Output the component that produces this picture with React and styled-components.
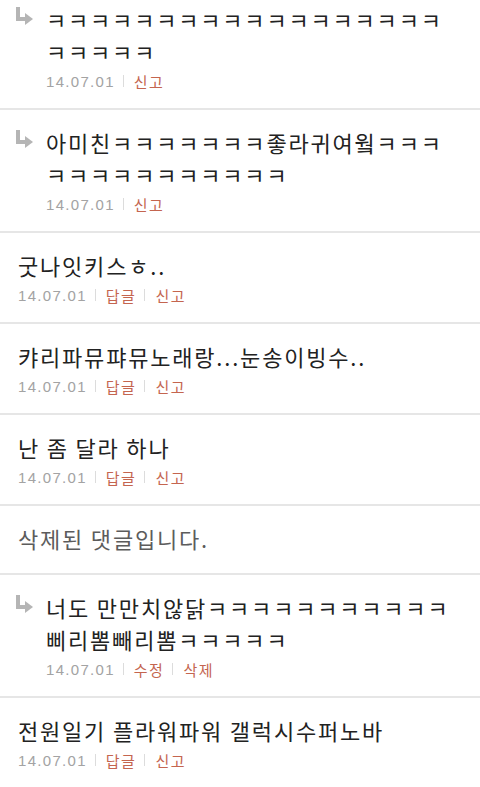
import React from 'react';
import styled, { createGlobalStyle } from 'styled-components';

const GlobalStyle = createGlobalStyle`
  html, body {
    margin: 0;
    padding: 0;
    background: #ffffff;
  }
  body {
    font-family: "Noto Sans CJK KR", "Noto Sans", sans-serif;
    -webkit-font-smoothing: antialiased;
  }
`;

const comments = [
  { reply: true, text: 'ㅋㅋㅋㅋㅋㅋㅋㅋㅋㅋㅋㅋㅋㅋㅋㅋㅋㅋㅋㅋㅋㅋㅋ', date: '14.07.01', actions: ['신고'] },
  { reply: true, text: '아미친ㅋㅋㅋㅋㅋㅋㅋ좋라귀여웤ㅋㅋㅋㅋㅋㅋㅋㅋㅋㅋㅋㅋㅋㅋ', date: '14.07.01', actions: ['신고'] },
  { text: '굿나잇키스ㅎ..', date: '14.07.01', actions: ['답글', '신고'] },
  { text: '캬리파뮤퍄뮤노래랑...눈송이빙수..', date: '14.07.01', actions: ['답글', '신고'] },
  { text: '난 좀 달라 하나', date: '14.07.01', actions: ['답글', '신고'] },
  { deleted: true, text: '삭제된 댓글입니다.' },
  { reply: true, text: '너도 만만치않닭ㅋㅋㅋㅋㅋㅋㅋㅋㅋㅋㅋ삐리뽐빼리뽐ㅋㅋㅋㅋㅋ', date: '14.07.01', actions: ['수정', '삭제'] },
  { text: '전원일기 플라워파워 갤럭시수퍼노바', date: '14.07.01', actions: ['답글', '신고'] },
];

const ReplyArrow = () => (
  <svg width="17" height="18" viewBox="0 0 17 18">
    <rect x="0" y="0" width="4" height="14" fill="#b5b5b5" />
    <rect x="0" y="10" width="10" height="4" fill="#b5b5b5" />
    <polygon points="9,6 17,12 9,18" fill="#b5b5b5" />
  </svg>
);

export default function App() {
  return (
    <Page>
      <GlobalStyle />
      <List>
        {comments.map((c, idx) => (
          <Row key={idx} deleted={c.deleted}>
            {c.reply && (
              <IconCol>
                <ReplyArrow />
              </IconCol>
            )}
            <Body>
              <Text deleted={c.deleted}>{c.text}</Text>
              {!c.deleted && (
                <Meta>
                  <Date>{c.date}</Date>
                  {c.actions.map(a => (
                    <React.Fragment key={a}>
                      <Bar />
                      <Action>{a}</Action>
                    </React.Fragment>
                  ))}
                </Meta>
              )}
            </Body>
          </Row>
        ))}
      </List>
    </Page>
  );
}

const Page = styled.div`
  width: 480px;
  height: 787px;
  overflow: hidden;
  background: #fff;
`;

const List = styled.ul`
  list-style: none;
  margin: -13px 0 0;
  padding: 0;
`;

const Row = styled.li`
  display: flex;
  align-items: flex-start;
  padding: 16px 26px ${props => (props.deleted ? '19px' : '13px')} 18px;
  border-bottom: 2px solid #e6e6e6;
`;

const IconCol = styled.div`
  flex: 0 0 30px;
  margin-left: -2px;
  padding-top: 3px;
  height: 29px;
`;

const Body = styled.div`
  flex: 1;
  min-width: 0;
`;

const Text = styled.div`
  font-size: 22px;
  line-height: 32px;
  letter-spacing: 1.8px;
  color: ${props => (props.deleted ? '#5c5c5c' : '#222')};
  font-family: "Noto Sans CJK KR", sans-serif;
`;

const Meta = styled.div`
  display: flex;
  align-items: center;
  height: 28px;
  font-size: 15px;
`;

const Date = styled.span`
  font-family: "Liberation Sans", Arial, sans-serif;
  color: #a3a3a3;
  letter-spacing: 1.3px;
`;

const Bar = styled.span`
  display: inline-block;
  width: 1px;
  height: 12px;
  margin: 0 10px 0 8px;
  background: #dcdcdc;
`;

const Action = styled.span`
  font-family: "Noto Sans CJK KR", sans-serif;
  letter-spacing: 1.5px;
  color: #c4654f;
`;
